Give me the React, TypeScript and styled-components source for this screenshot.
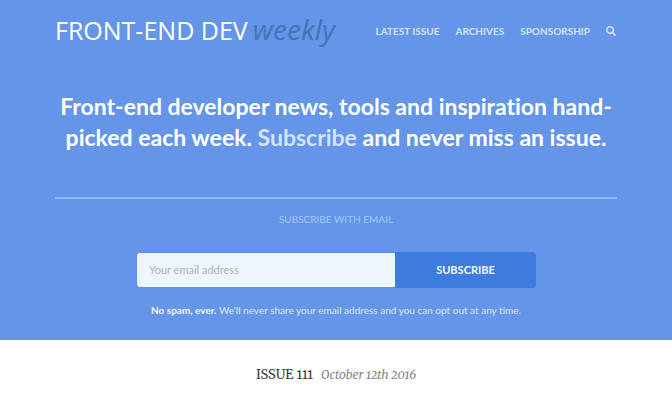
import React from "react";
import styled, { createGlobalStyle } from "styled-components";
import { FaSearch } from "react-icons/fa";

const GlobalStyle = createGlobalStyle`
  * { box-sizing: border-box; }
  body {
    margin: 0;
    background: #ffffff;
    font-family: Lato, "Liberation Sans", sans-serif;
    font-variant-ligatures: none;
  }
`;

const Hero = styled.header`
  display: flex;
  flex-direction: column;
  padding: 12px 55px 22px;
  background: #6495e8;
  color: #ffffff;
`;

const TopBar = styled.div`
  display: flex;
  align-items: center;
  justify-content: space-between;
  height: 38px;
`;

const Logo = styled.a`
  display: flex;
  align-items: baseline;
  gap: 5px;
  padding-bottom: 4px;
  color: #ffffff;
  font: 400 25px/36px "Open Sans", "Noto Sans", sans-serif;
  text-decoration: none;
  white-space: nowrap;
`;

const LogoAccent = styled.em`
  color: #4674b8;
  font-family: "Noto Sans", "Open Sans", sans-serif;
  font-size: 28px;
`;

const Nav = styled.nav`
  display: flex;
  align-items: center;
  gap: 16px;
  padding-right: 1px;
`;

const NavLink = styled.a`
  display: flex;
  color: #d3e5fc;
  font-size: 10px;
  font-weight: 700;
  line-height: 16px;
  text-decoration: none;
  text-transform: uppercase;
  white-space: nowrap;
`;

const Headline = styled.h1`
  margin: 41px 0 0;
  font-size: 23px;
  font-weight: 700;
  line-height: 31px;
  text-align: center;
`;

const HeadlineLink = styled.a`
  color: #d3e4fc;
  text-decoration: none;
`;

const Signup = styled.form`
  display: flex;
  flex-direction: column;
  align-items: center;
  margin-top: 44px;
  border-top: 2px solid #92b9f3;
`;

const SignupLabel = styled.label`
  margin-top: 12px;
  color: #a5c8f8;
  font-size: 10px;
  line-height: 16px;
  text-transform: uppercase;
`;

const FieldRow = styled.div`
  display: flex;
  width: 100%;
  max-width: 400px;
  height: 36px;
  margin-top: 25px;
`;

const EmailInput = styled.input`
  flex: 1;
  min-width: 0;
  padding: 0 12px;
  border: 1px solid #5b8ee4;
  border-right: 0;
  border-radius: 4px 0 0 4px;
  background: #eff5fc;
  color: #444444;
  font: 400 11px/16px Lato, sans-serif;
  &::placeholder {
    color: #aeb2b8;
    opacity: 1;
  }
`;

const SubmitButton = styled.button`
  width: 141px;
  padding: 0;
  border: 0;
  border-radius: 0 4px 4px 0;
  background: #3d7bdf;
  color: #f5faff;
  font: 700 11px/16px Lato, sans-serif;
  text-transform: uppercase;
  cursor: pointer;
`;

const Note = styled.p`
  margin: 14px 0 0;
  color: #dceafd;
  font-size: 10px;
  line-height: 16px;
`;

const NoteLead = styled.strong`
  color: #f2f8ff;
`;

const Issue = styled.h2`
  display: flex;
  align-items: baseline;
  justify-content: center;
  gap: 8px;
  margin: 25px 0;
  color: #3c3c3c;
  font: 400 13px/20px Merriweather, "Liberation Serif", serif;
  font-variant-numeric: oldstyle-nums;
`;

const IssueDate = styled.em`
  color: #858585;
  font-size: 12px;
`;

const links = ["Latest Issue", "Archives", "Sponsorship"];

export default function App() {
  return (
    <>
      <GlobalStyle />
      <Hero>
        <TopBar>
          <Logo href="#home">
            <span>FRONT-END DEV</span>
            <LogoAccent>weekly</LogoAccent>
          </Logo>
          <Nav>
            {links.map((label) => (
              <NavLink key={label} href="#">
                {label}
              </NavLink>
            ))}
            <NavLink href="#search" aria-label="Search">
              <FaSearch size={10} />
            </NavLink>
          </Nav>
        </TopBar>
        <Headline>
          Front-end developer news, tools and inspiration hand-picked each week.{" "}
          <HeadlineLink href="#email">Subscribe</HeadlineLink> and never miss an issue.
        </Headline>
        <Signup onSubmit={(event) => event.preventDefault()}>
          <SignupLabel htmlFor="email">Subscribe with email</SignupLabel>
          <FieldRow>
            <EmailInput id="email" type="email" placeholder="Your email address" />
            <SubmitButton type="submit">Subscribe</SubmitButton>
          </FieldRow>
          <Note>
            <NoteLead>No spam, ever.</NoteLead> We'll never share your email address and you can opt
            out at any time.
          </Note>
        </Signup>
      </Hero>
      <main>
        <Issue>
          <span>ISSUE 111</span>
          <IssueDate>October 12th 2016</IssueDate>
        </Issue>
      </main>
    </>
  );
}
